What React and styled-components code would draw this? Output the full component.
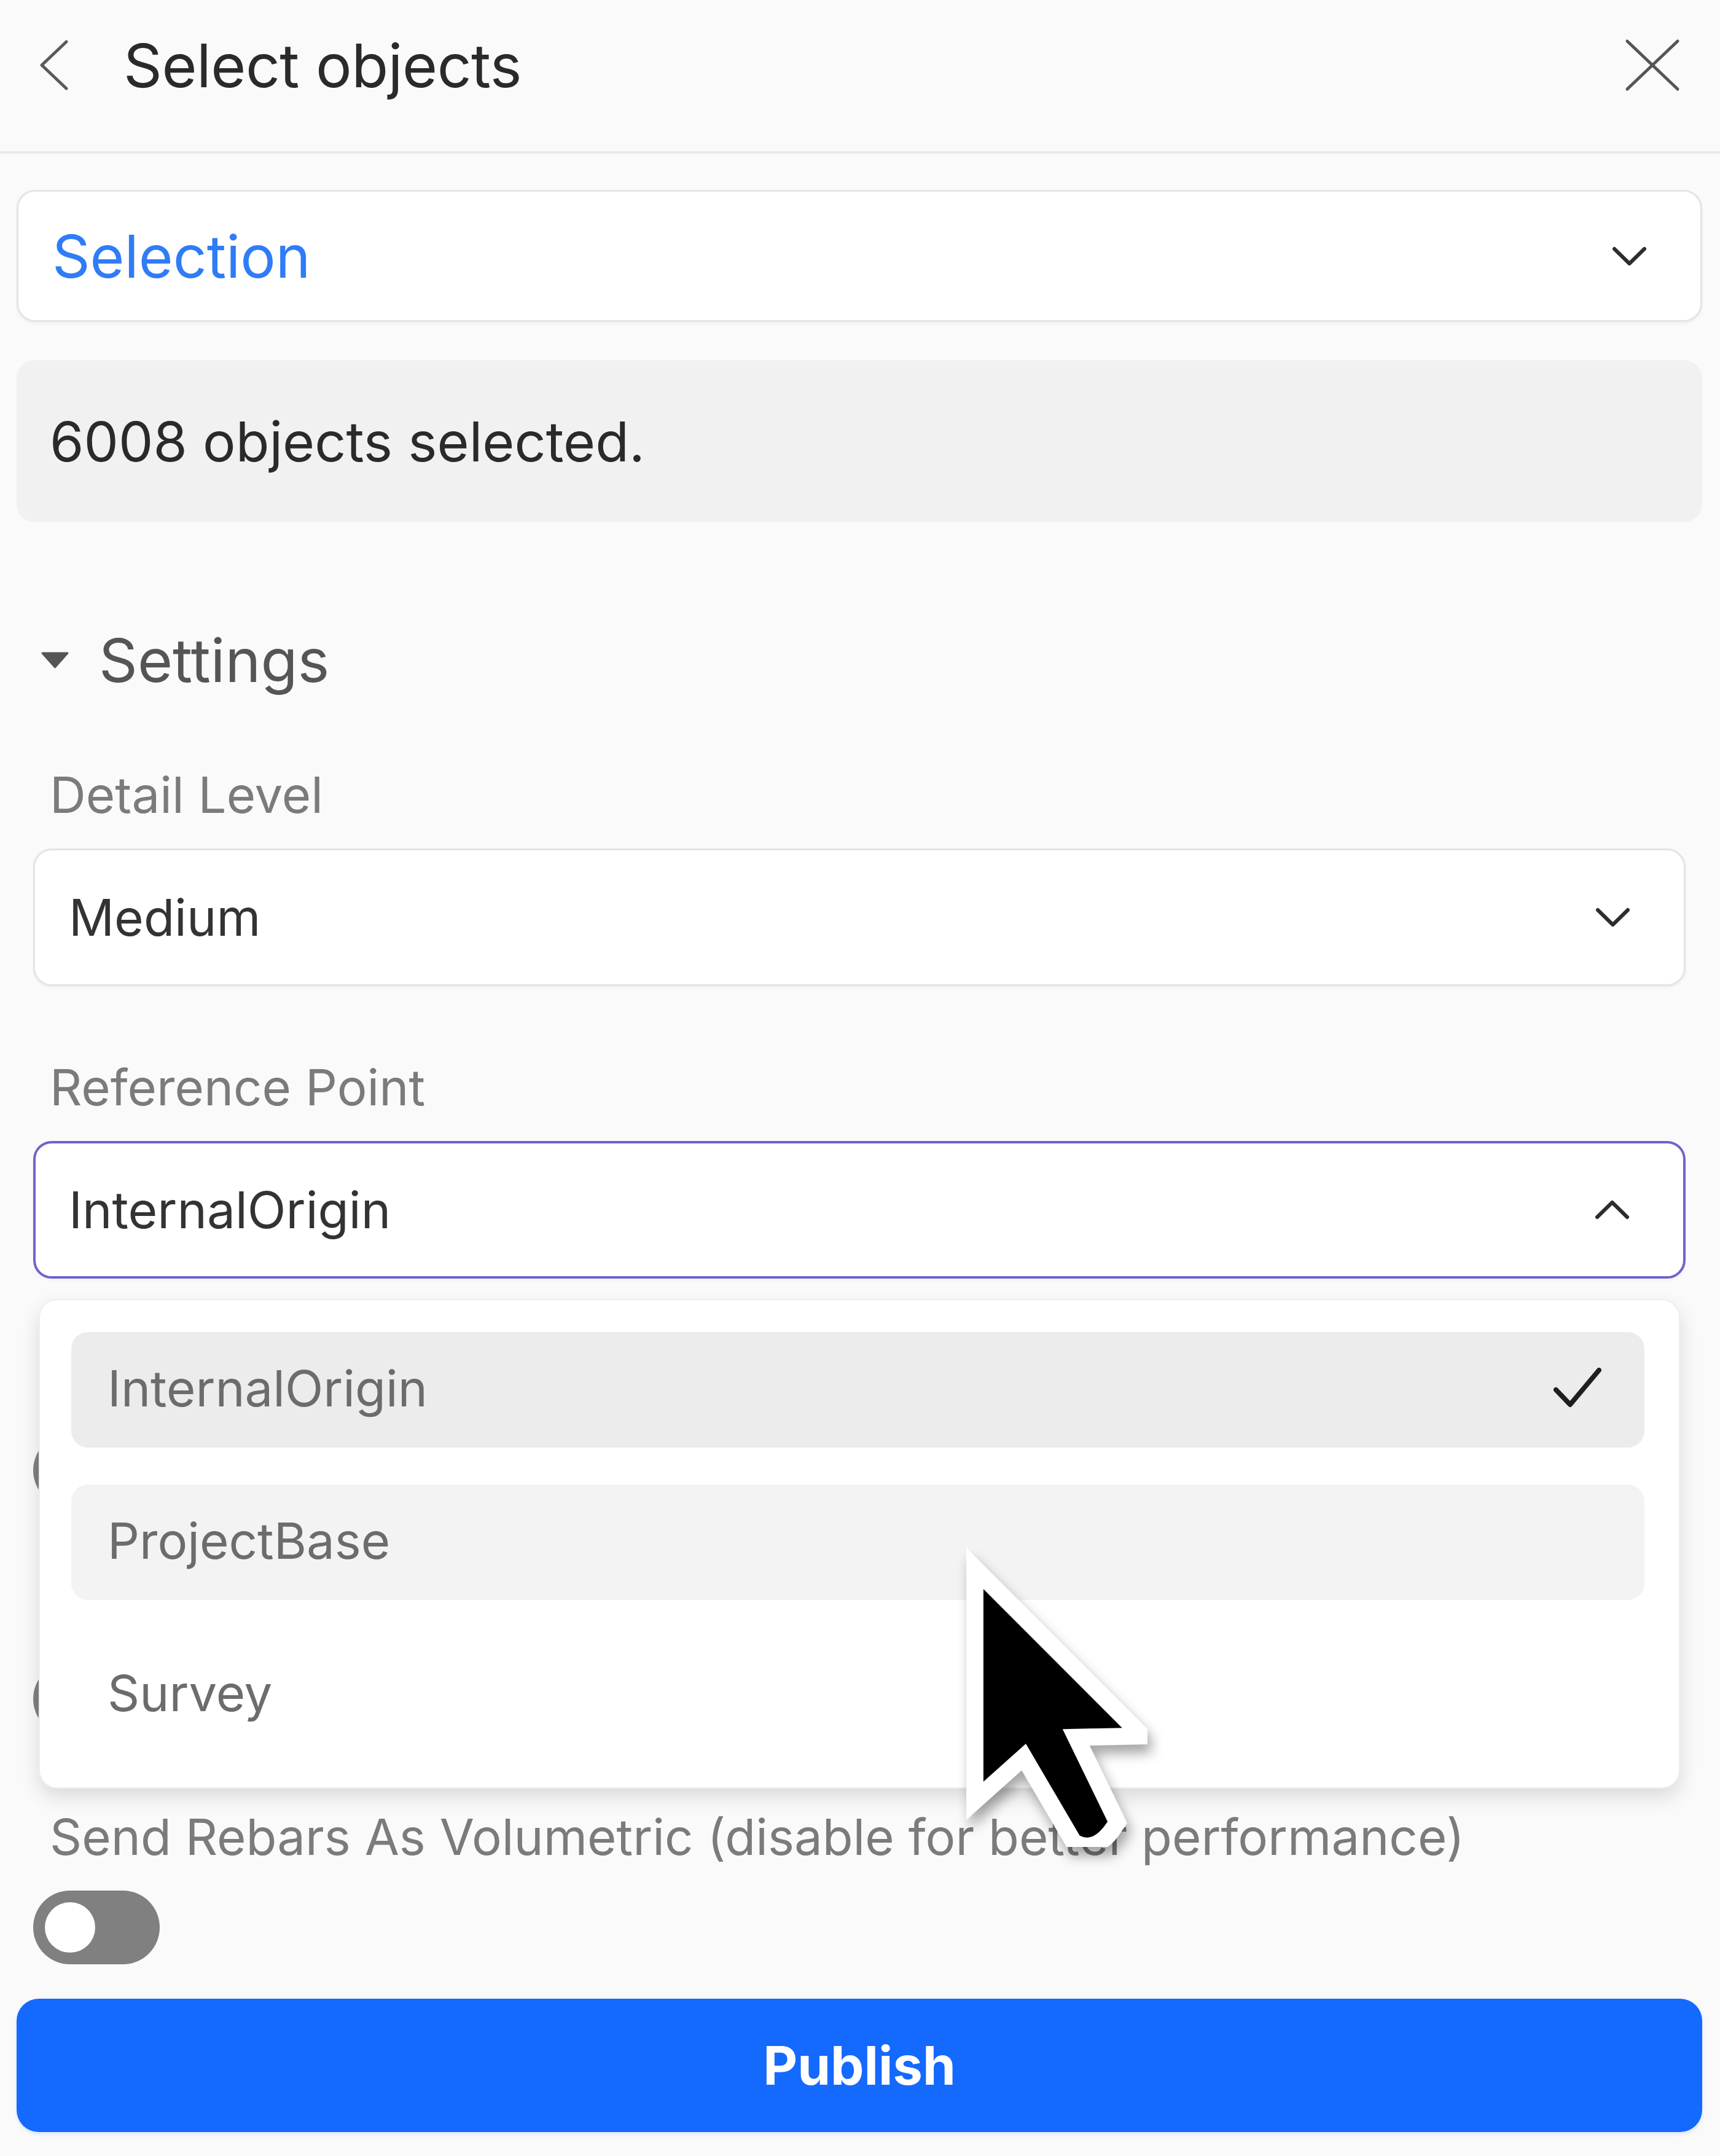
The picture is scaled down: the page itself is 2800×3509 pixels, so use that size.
import styled, { createGlobalStyle } from "styled-components"

const GlobalStyle = createGlobalStyle`
    html, body {
        margin: 0;
        padding: 0;
        background: #fafafa;
    }
    body {
        font-family: Inter, "Noto Sans", "Liberation Sans", sans-serif;
        color: #2b2b2b;
    }
    * { box-sizing: border-box; }
`

const Page = styled.div`
    position: relative;
    width: 2800px;
    min-height: 3509px;
    background: #fafafa;
`

const Header = styled.div`
    height: 250px;
    display: flex;
    align-items: center;
    padding: 0 65px 34px 63px;
    border-bottom: 4px solid #e9e9e9;

    .title {
        margin-left: 89px;
        font-size: 98px;
        font-weight: 400;
        color: #2a2a2a;
        letter-spacing: -0.5px;
    }
    .spacer { flex: 1; }
`

const Body = styled.div`
    padding: 59px 29px 36px 27px;
    display: flex;
    flex-direction: column;
`

const SelectBox = styled.div`
    height: ${p => p.tall ? "224px" : "215px"};
    display: flex;
    align-items: center;
    justify-content: space-between;
    background: #fff;
    border: ${p => p.focused ? "4px solid #6e64cc" : "3px solid #e4e4e4"};
    border-radius: 30px;
    padding: 0 87px 0 ${p => p.focused ? "54px" : "55px"};
    box-shadow: 0 3px 5px rgba(0, 0, 0, 0.04);
    font-size: ${p => p.big ? "96px" : "82px"};
    color: ${p => p.accent ? "#2f7cf6" : "#333"};
`

const InfoBox = styled.div`
    margin-top: 62px;
    height: 264px;
    background: #f1f1f1;
    border-radius: 30px;
    display: flex;
    align-items: center;
    padding-left: 54px;
    font-size: 89.5px;
    color: #2a2a2a;
`

const SettingsHeader = styled.div`
    margin-top: 164px;
    height: 120px;
    display: flex;
    align-items: center;
    padding-left: 40px;
    gap: 49px;
    font-size: 98px;
    color: #555;
`

const Fields = styled.div`
    margin-top: 110px;
    padding: 0 27px;
    display: flex;
    flex-direction: column;
    gap: 115px;
`

const Field = styled.div`
    position: relative;
    display: flex;
    flex-direction: column;
`

const Label = styled.div`
    font-size: 81.5px;
    line-height: 100px;
    height: 100px;
    padding-left: 27px;
    margin-bottom: 37px;
    color: #7b7b7b;
    white-space: nowrap;
`

const Menu = styled.div`
    position: absolute;
    top: calc(100% + 33px);
    left: 9px;
    right: 9px;
    z-index: 5;
    background: #fff;
    border: 2px solid #eeeeee;
    border-radius: 30px;
    box-shadow: 0 14px 32px rgba(0, 0, 0, 0.13);
    padding: 52px 56px 57px 51px;
    display: flex;
    flex-direction: column;
    gap: 60px;
`

const MenuItem = styled.div`
    height: 188px;
    border-radius: 27px;
    background: ${p => p.selected ? "#ececec" : p.hover ? "#f3f3f3" : "transparent"};
    display: flex;
    align-items: center;
    justify-content: space-between;
    padding: 0 70px 6px 59px;
    font-size: 81.5px;
    color: #6c6c6c;
`

const Toggle = styled.div`
    width: 206px;
    height: 120px;
    border-radius: 60px;
    background: ${p => p.on ? "#1469fe" : "#808080"};
    position: relative;

    &::after {
        content: "";
        position: absolute;
        top: 19px;
        left: ${p => p.on ? "105px" : "19px"};
        width: 82px;
        height: 82px;
        border-radius: 50%;
        background: #fff;
    }
`

const PublishButton = styled.button`
    margin-top: 56px;
    height: 217px;
    width: 100%;
    border: none;
    border-radius: 36px;
    background: #1469fe;
    color: #fff;
    font-family: inherit;
    font-size: 86.5px;
    font-weight: 700;
    box-shadow: 0 3px 6px rgba(20, 105, 254, 0.15);
`

const Cursor = styled.svg`
    position: absolute;
    left: 1538px;
    top: 2476px;
    z-index: 10;
    filter: drop-shadow(6px 14px 10px rgba(0, 0, 0, 0.35));
`

const ChevronDown = ({ up }) => (
    <svg width="57" height="32" viewBox="0 0 57 32">
        <polyline
            points={up ? "4,28 28.5,4 53,28" : "4,4 28.5,28 53,4"}
            fill="none"
            stroke="#2d2d2d"
            strokeWidth="6"
            strokeLinecap="round"
            strokeLinejoin="round"
        />
    </svg>
)

const App = () => {
    return (
        <>
            <GlobalStyle />
            <Page>
                <Header>
                    <svg width="49" height="82" viewBox="0 0 49 82">
                        <polyline points="45,3 5,41 45,79" fill="none" stroke="#5a5a5a" strokeWidth="5" strokeLinecap="round" strokeLinejoin="round" />
                    </svg>
                    <span className="title">Select objects</span>
                    <span className="spacer" />
                    <svg width="90" height="86" viewBox="0 0 90 86">
                        <line x1="4" y1="4" x2="86" y2="82" stroke="#555" strokeWidth="5" strokeLinecap="round" />
                        <line x1="86" y1="4" x2="4" y2="82" stroke="#555" strokeWidth="5" strokeLinecap="round" />
                    </svg>
                </Header>

                <Body>
                    <SelectBox big accent>
                        <span>Selection</span>
                        <ChevronDown />
                    </SelectBox>

                    <InfoBox>6008 objects selected.</InfoBox>

                    <SettingsHeader>
                        <svg width="45" height="27" viewBox="0 0 45 27">
                            <polygon points="2,2 43,2 22.5,25" fill="#555" strokeLinejoin="round" stroke="#555" strokeWidth="3" />
                        </svg>
                        <span>Settings</span>
                    </SettingsHeader>

                    <Fields>
                        <Field>
                            <Label>Detail Level</Label>
                            <SelectBox tall>
                                <span>Medium</span>
                                <ChevronDown />
                            </SelectBox>
                        </Field>

                        <Field>
                            <Label>Reference Point</Label>
                            <SelectBox tall focused>
                                <span>InternalOrigin</span>
                                <ChevronDown up />
                            </SelectBox>
                            <Menu>
                                <MenuItem selected>
                                    <span>InternalOrigin</span>
                                    <svg width="78" height="66" viewBox="0 0 78 66">
                                        <polyline points="4,36 27,60 74,4" fill="none" stroke="#1f1f1f" strokeWidth="8" strokeLinecap="round" strokeLinejoin="round" />
                                    </svg>
                                </MenuItem>
                                <MenuItem hover>ProjectBase</MenuItem>
                                <MenuItem>Survey</MenuItem>
                            </Menu>
                        </Field>

                        {/* two more toggle fields sit under the open menu; only their edges show */}
                        <Field>
                            <Label />
                            <Toggle />
                        </Field>

                        <Field>
                            <Label />
                            <Toggle />
                        </Field>

                        <Field>
                            <Label>Send Rebars As Volumetric (disable for better performance)</Label>
                            <Toggle />
                        </Field>
                    </Fields>

                    <PublishButton>Publish</PublishButton>
                </Body>

                <Cursor width="330" height="530" viewBox="0 0 320 514">
                    <path
                        d="M61 107 L61 411 L128 351 L213 496 Q235 508 257 474 L186 328 L280 326 Z"
                        fill="#000"
                        stroke="#fff"
                        strokeWidth="54"
                        strokeLinejoin="miter"
                        strokeMiterlimit="3"
                        paintOrder="stroke"
                    />
                </Cursor>
            </Page>
        </>
    )
}

export default App
